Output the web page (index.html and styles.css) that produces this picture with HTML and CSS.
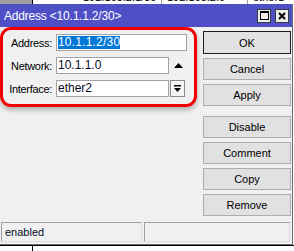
FILE: index.html
```html
<!DOCTYPE html>
<html>
<head>
<meta charset="utf-8">
<link rel="stylesheet" href="styles.css">
</head>
<body>
<div class="desk">
  <div class="bg-top">
    <div class="bg-gutter"></div>
    <div class="bg-cell c1"><span>192.168.2.1/30</span></div>
    <div class="bg-cell c2"><span>192.168.2.0</span></div>
    <div class="bg-cell c3"><span>ether1</span></div>
  </div>
  <div class="bg-mid"></div>
  <div class="bg-bottom">
    <div class="bg-gutter2"></div>
    <div class="bg-rest"></div>
  </div>

  <div class="win">
    <div class="titlebar">
      <span class="title">Address &lt;10.1.1.2/30&gt;</span>
      <div class="tbtns">
        <span class="tbtn"><svg width="9" height="9" viewBox="0 0 9 9"><rect x="0.5" y="0.5" width="8" height="8" fill="none" stroke="#000" stroke-width="1"/><rect x="0" y="0" width="9" height="2" fill="#000"/></svg></span>
        <span class="tbtn"><svg width="8" height="8" viewBox="0 0 8 8"><path d="M1 1 L7 7 M7 1 L1 7" stroke="#000" stroke-width="2" fill="none"/></svg></span>
      </div>
    </div>
    <div class="body">
      <div class="main">
        <div class="form">
          <label class="lbl">Address:</label>
          <div class="inp wide"><span class="sel">10.1.1.2/30</span></div>
          <label class="lbl">Network:</label>
          <div class="inp">10.1.1.0</div>
          <div class="arrow"><svg width="9" height="5" viewBox="0 0 9 5"><polygon points="0,5 4.5,0 9,5" fill="#000"/></svg></div>
          <label class="lbl">Interface:</label>
          <div class="inp">ether2</div>
          <div class="dd"><svg width="7" height="8" viewBox="0 0 7 8"><rect x="0" y="0" width="7" height="1.5" fill="#000"/><polygon points="0,3 7,3 3.5,7" fill="#000"/></svg></div>
        </div>
        <div class="buttons">
          <div class="btn default">OK</div>
          <div class="btn">Cancel</div>
          <div class="btn">Apply</div>
          <div class="btn sep">Disable</div>
          <div class="btn">Comment</div>
          <div class="btn">Copy</div>
          <div class="btn">Remove</div>
        </div>
      </div>
      <div class="status">
        <div class="sbox s1">enabled</div>
        <div class="sbox s2"></div>
      </div>
    </div>
  </div>
</div>
</body>
</html>
```

FILE: styles.css
```css
html, body {
  margin: 0;
  padding: 0;
  background: #fff;
}
body {
  width: 294px;
  height: 251px;
  overflow: hidden;
  font-family: "Liberation Sans", Arial, sans-serif;
}
.desk {
  position: relative;
  width: 294px;
  height: 251px;
}
.bg-top {
  height: 4px;
  display: flex;
  overflow: hidden;
  background: #fff;
}
.bg-gutter {
  width: 32px;
  background: #a0a0a0;
  border-right: 1px solid #000;
}
.bg-cell {
  height: 4px;
  overflow: hidden;
  font-size: 11px;
  line-height: 12px;
  color: #000;
  border-right: 1px solid #a0a0a0;
  box-sizing: border-box;
}
.bg-cell span {
  display: block;
  margin-top: -9px;
  white-space: nowrap;
}
.c1 { width: 129px; padding-left: 50px; box-sizing: border-box; }
.c2 { width: 86px; padding-left: 5px; }
.c3 { flex: 1; padding-left: 5px; border-right: none; }
.bg-mid { height: 241px; }
.bg-bottom {
  height: 6px;
  display: flex;
  border-top: 1px solid #000;
  box-sizing: border-box;
}
.bg-gutter2 {
  width: 32px;
  border-right: 1px solid #000;
}
.bg-rest { flex: 1; }

.win {
  position: absolute;
  left: 0;
  top: 4px;
  width: 293px;
  height: 241px;
  box-sizing: border-box;
  border-right: 1px solid #6e6e6e;
  border-bottom: 1px solid #6e6e6e;
  display: flex;
  flex-direction: column;
  background: #f0f0f0;
}
.titlebar {
  height: 23px;
  flex: none;
  background: #4f4fc7;
  display: flex;
  align-items: center;
  padding-left: 4px;
}
.title {
  color: #fff;
  font-size: 12px;
  letter-spacing: -0.2px;
  white-space: nowrap;
}
.tbtns {
  margin-left: auto;
  margin-right: 3px;
  display: flex;
  gap: 4px;
}
.tbtn {
  width: 14px;
  height: 14px;
  box-sizing: border-box;
  background: #ececec;
  border: 1px solid #3a3a3a;
  display: flex;
  align-items: center;
  justify-content: center;
}
.body {
  flex: 1;
  display: flex;
  flex-direction: column;
}
.main {
  flex: 1;
  display: flex;
  align-items: flex-start;
}
.form {
  width: 197px;
  height: 80px;
  box-sizing: border-box;
  border: 3px solid #f20000;
  border-radius: 11px;
  box-shadow: 0 3px 5px rgba(0,0,0,0.28);
  padding: 4px 7px 7px 0;
  display: grid;
  grid-template-columns: 49px 113px 14px;
  grid-auto-rows: 17px;
  column-gap: 4px;
  row-gap: 6px;
  align-items: center;
}
.form .lbl {
  grid-column: 1;
  text-align: right;
  font-size: 11px;
  letter-spacing: -0.3px;
  color: #000;
  white-space: nowrap;
}
.inp {
  height: 17px;
  box-sizing: border-box;
  background: #fff;
  border: 1px solid #a3a3a3;
  font-size: 12px;
  line-height: 15px;
  padding-left: 1px;
  color: #0a0a2a;
  white-space: nowrap;
  overflow: hidden;
}
.inp.wide {
  grid-column: 2 / span 2;
}
.sel {
  background: #0078d7;
  color: #fff;
  display: inline-block;
  line-height: 13px;
  vertical-align: top;
  margin-top: 1px;
  letter-spacing: 0.2px;
}
.arrow {
  margin-left: -4px;
  width: 18px;
  display: flex;
  justify-content: center;
  align-items: center;
}
.dd {
  margin-left: -3px;
  width: 15px;
  height: 17px;
  box-sizing: border-box;
  border: 1px solid #8a8a8a;
  background: #f4f4f4;
  display: flex;
  align-items: center;
  justify-content: center;
}
.buttons {
  margin-left: 6px;
  width: 88px;
  padding-top: 4px;
  display: flex;
  flex-direction: column;
  gap: 4px;
}
.btn {
  height: 22px;
  box-sizing: border-box;
  background: #e1e1e1;
  border: 1px solid #adadad;
  font-size: 11px;
  display: flex;
  align-items: center;
  justify-content: center;
  color: #000;
}
.btn.default {
  border: 1px solid #1e1e1e;
  height: 23px;
}
.btn.sep {
  margin-top: 6px;
}
.status {
  display: flex;
  gap: 2px;
  padding: 0 0 2px 1px;
}
.sbox {
  height: 20px;
  box-sizing: border-box;
  border: 1px solid #a0a0a0;
  border-right-color: #dcdcdc;
  border-bottom-color: #dcdcdc;
  font-size: 11px;
  line-height: 18px;
  padding-left: 3px;
  color: #0a0a2a;
}
.s1 { width: 141px; }
.s2 { width: 146px; }
```
